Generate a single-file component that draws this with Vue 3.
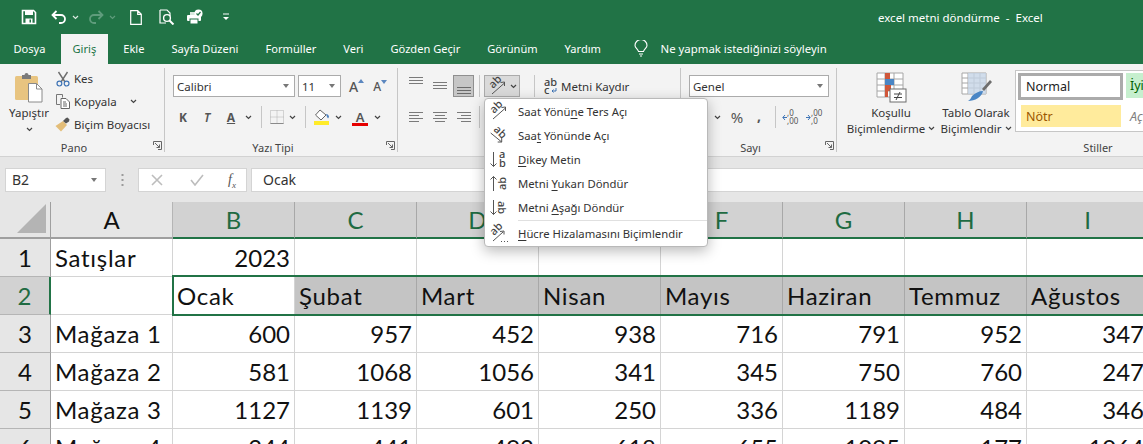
<script setup>
const tabs = ['Dosya', 'Giriş', 'Ekle', 'Sayfa Düzeni', 'Formüller', 'Veri', 'Gözden Geçir', 'Görünüm', 'Yardım']
const columns = ['A', 'B', 'C', 'D', 'E', 'F', 'G', 'H', 'I']
const months = ['Ocak', 'Şubat', 'Mart', 'Nisan', 'Mayıs', 'Haziran', 'Temmuz', 'Ağustos']
const stores = [
  { id: 3, name: 'Mağaza 1', values: [600, 957, 452, 938, 716, 791, 952, 347] },
  { id: 4, name: 'Mağaza 2', values: [581, 1068, 1056, 341, 345, 750, 760, 247] },
  { id: 5, name: 'Mağaza 3', values: [1127, 1139, 601, 250, 336, 1189, 484, 346] },
  { id: 6, name: 'Mağaza 4', values: [244, 441, 492, 618, 655, 1095, 177, 1064] }
]
</script>

<template>
  <div class="excel">
    <!-- Title bar -->
    <header class="titlebar">
      <div class="qat">
        <svg class="q-save" width="16" height="16" viewBox="0 0 16 16"><path d="M1.5 1.5h11l2 2v11h-13z" fill="none" stroke="#fff" stroke-width="1.6" /><rect x="4" y="2" width="8" height="4" fill="#fff" /><rect x="4.5" y="9.5" width="7" height="5" fill="#fff" /><rect x="8.5" y="10.5" width="1.5" height="3" fill="#217346" /></svg>
        <svg class="q-undo" width="16" height="14" viewBox="0 0 16 14"><path d="M5.5 1 1.5 5l4 4M2 5h8a4 4 0 0 1 0 8H8" fill="none" stroke="#fff" stroke-width="1.8" /></svg>
        <svg class="chev q-c1" width="7" height="5" viewBox="0 0 7 5"><path d="m1 1 2.500 2.500L6 1" fill="none" stroke="#d9e8df" stroke-width="1.200" /></svg>
        <svg class="q-redo" width="16" height="14" viewBox="0 0 16 14"><path d="m10.500 1 4 4-4 4M14 5H6a4 4 0 0 0 0 8h2" fill="none" stroke="#5f9c7c" stroke-width="1.800" /></svg>
        <svg class="chev q-c2" width="7" height="5" viewBox="0 0 7 5"><path d="m1 1 2.500 2.500L6 1" fill="none" stroke="#5f9c7c" stroke-width="1.200" /></svg>
        <svg class="q-new" width="12" height="15" viewBox="0 0 12 15"><path d="M.7.700h7l3.600 3.600v10H.7zM7.700.7v3.600h3.600" fill="#217346" stroke="#fff" stroke-width="1.200" /></svg>
        <svg class="q-preview" width="16" height="16" viewBox="0 0 16 16"><path d="M1 1h7l3 3v3M1 1v13h6" fill="none" stroke="#fff" stroke-width="1.200" /><circle cx="8" cy="9" r="3.400" fill="none" stroke="#fff" stroke-width="1.400" /><path d="m10.500 11.500 4 4" stroke="#fff" stroke-width="2" /></svg>
        <svg class="q-print" width="18" height="16" viewBox="0 0 18 16"><rect x="1" y="6" width="14" height="6" rx="1" fill="#fff" /><rect x="4" y="10" width="8" height="5" fill="#fff" stroke="#217346" /><rect x="4" y="3" width="6" height="3" fill="#d9e8df" /><circle cx="12.500" cy="4.500" r="4" fill="#fff" /><path d="m10.500 4.500 1.500 1.500 2.500-3" fill="none" stroke="#217346" stroke-width="1.200" /></svg>
        <svg class="q-more" width="8" height="8" viewBox="0 0 8 8"><path d="M1 1h6" stroke="#fff" /><path d="M1 4h6L4 7z" fill="#fff" /></svg>
      </div>
      <div class="doc-title">excel metni döndürme &nbsp;-&nbsp; Excel</div>
    </header>

    <!-- Tabs -->
    <nav class="tabs">
      <div v-for="tab in tabs" :key="tab" class="tab" :class="{ active: tab === 'Giriş' }">{{ tab }}</div>
      <svg class="bulb" width="14" height="17" viewBox="0 0 14 17"><path d="M4.500 11.500C4 9 1 8 1 5.500a6 6 0 0 1 12 0C13 8 10 9 9.500 11.500zM5 14h4M6 16h2" fill="none" stroke="#fff" stroke-width="1.100" /></svg>
      <div class="tell">Ne yapmak istediğinizi söyleyin</div>
    </nav>

    <!-- Ribbon -->
    <section class="ribbon">
      <div class="group g-pano">
        <div class="group-body pano-body">
          <div class="paste">
            <svg width="30" height="31" viewBox="0 0 30 31"><rect x="1" y="4" width="23" height="24" rx="1.500" fill="#e8c480" /><path d="M8 3h2.500a2 2 0 0 1 4 0H17v4H8z" fill="#7a7a7a" /><path d="M14.500 11.500h8l5.500 5.500v13H14.500z" fill="#fff" stroke="#8a8a8a" /><path d="M22.500 11.500V17H28" fill="none" stroke="#8a8a8a" /></svg>
            <span class="paste-label">Yapıştır</span>
            <svg class="chev" width="7" height="5" viewBox="0 0 7 5"><path d="m1 1 2.500 2.500L6 1" fill="none" stroke="#444" stroke-width="1.200" /></svg>
          </div>
          <div class="clip-list">
            <div class="clip-item">
              <svg width="14" height="16" viewBox="0 0 14 16"><path d="M2.500 1 9 11M11.500 1 5 11" stroke="#6d6d6d" stroke-width="1.400" /><circle cx="3.400" cy="12.600" r="2.400" fill="none" stroke="#3f74b5" stroke-width="1.200" /><circle cx="10.600" cy="12.600" r="2.400" fill="none" stroke="#3f74b5" stroke-width="1.200" /></svg>
              <span>Kes</span>
            </div>
            <div class="clip-item">
              <svg width="14" height="15" viewBox="0 0 14 15"><path d="M.5.500h6v3M.5.500v10h3.500" fill="none" stroke="#777" /><path d="M5 4.500h5l3.500 3.500v6.500H5zM7 8h3M7 10h4M7 12h4" fill="#fff" stroke="#666" /></svg>
              <span>Kopyala</span>
              <svg class="chev clip-chev" width="7" height="5" viewBox="0 0 7 5"><path d="m1 1 2.500 2.500L6 1" fill="none" stroke="#444" stroke-width="1.200" /></svg>
            </div>
            <div class="clip-item">
              <svg width="16" height="15" viewBox="0 0 16 15"><path d="M8 4 12 8 6 14.500 0.500 9z" fill="#e3bd78" /><path d="M8 4l3-3 1.500-.500 2 2-.500 2-3 2z" fill="#555" /></svg>
              <span>Biçim Boyacısı</span>
            </div>
          </div>
        </div>
        <div class="group-label">Pano
          <svg class="launcher" width="9" height="9" viewBox="0 0 9 9"><path d="M.5 4V.5H8.500V8.500H5M2 2l4.500 4.500M6.500 3.500v3h-3" fill="none" stroke="#666" /></svg>
        </div>
      </div>

      <div class="group g-font">
        <div class="group-body tool-rows">
          <div class="tool-row">
            <div class="select s-font"><span>Calibri</span><i class="caret"></i></div>
            <div class="select s-size"><span>11</span><i class="caret"></i></div>
            <div class="grow-a g1">A<svg width="6" height="4" viewBox="0 0 6 4"><path d="M0 4 3 0l3 4z" fill="#5b87bf" /></svg></div>
            <div class="grow-a g2">A<svg width="6" height="4" viewBox="0 0 6 4"><path d="M0 0l3 4 3-4z" fill="#5b87bf" /></svg></div>
          </div>
          <div class="tool-row r2-font">
            <div class="fmt w24 bold">K</div>
            <div class="fmt w24 italic">T</div>
            <div class="fmt w24 under">A</div>
            <svg class="chev c10" width="7" height="5" viewBox="0 0 7 5"><path d="m1 1 2.500 2.500L6 1" fill="none" stroke="#444" stroke-width="1.200" /></svg>
            <i class="vsep s-a"></i>
            <div class="fmt w21"><svg width="14" height="14" viewBox="0 0 14 14"><path d="M.5.500h13v13H.5zM7 .5v13M.5 7h13" fill="none" stroke="#b0b0b0" stroke-dasharray="1 1" /><path d="M.5 13.500h13" stroke="#8a8a8a" /></svg></div>
            <svg class="chev c10 ml2" width="7" height="5" viewBox="0 0 7 5"><path d="m1 1 2.500 2.500L6 1" fill="none" stroke="#444" stroke-width="1.200" /></svg>
            <i class="vsep s-a"></i>
            <div class="fmt w23"><svg width="16" height="16" viewBox="0 0 16 16"><path d="M6 1 1.500 6 7 11 12 6z" fill="#fff" stroke="#666" /><path d="M12 5c2 0 3 1.500 3 3l-1 1.500-1-1.500z" fill="#4f81bd" /><rect x="0" y="12" width="15" height="4" fill="#ffeb2a" /></svg></div>
            <svg class="chev c10" width="7" height="5" viewBox="0 0 7 5"><path d="m1 1 2.500 2.500L6 1" fill="none" stroke="#444" stroke-width="1.200" /></svg>
            <div class="fmt w24 ml5 color-a">A</div>
            <svg class="chev c10" width="7" height="5" viewBox="0 0 7 5"><path d="m1 1 2.500 2.500L6 1" fill="none" stroke="#444" stroke-width="1.200" /></svg>
          </div>
        </div>
        <div class="group-label">Yazı Tipi
          <svg class="launcher" width="9" height="9" viewBox="0 0 9 9"><path d="M.5 4V.5H8.500V8.500H5M2 2l4.500 4.500M6.500 3.500v3h-3" fill="none" stroke="#666" /></svg>
        </div>
      </div>

      <div class="group g-align">
        <div class="group-body tool-rows">
          <div class="tool-row r1-align">
            <div class="fmt w24"><svg class="up-6" width="14" height="10" viewBox="0 0 14 10"><path d="M0 .5h14M0 3.500h14M0 6.500h14" stroke="#7a7a7a" /></svg></div>
            <div class="fmt w24"><svg width="14" height="10" viewBox="0 0 14 10"><path d="M0 1.500h14M0 4.500h14M0 7.500h14" stroke="#7a7a7a" /></svg></div>
            <div class="fmt bottom-btn"><svg class="down-5" width="14" height="10" viewBox="0 0 14 10"><path d="M0 3.500h14M0 6.500h14M0 9.500h14" stroke="#6a6a6a" /></svg></div>
            <i class="vsep s-b"></i>
            <div class="orient-btn">
              <svg width="20" height="20" viewBox="0 0 20 20"><text transform="translate(5 13) rotate(-45)" class="ab">ab</text><path d="M4 18 16.500 7M12.500 6.500l4-.500v4" fill="none" stroke="#555" /></svg>
              <svg class="chev" width="7" height="5" viewBox="0 0 7 5"><path d="m1 1 2.500 2.500L6 1" fill="none" stroke="#444" stroke-width="1.200" /></svg>
            </div>
            <i class="vsep s-c"></i>
            <div class="wrap-text">
              <svg width="14" height="16" viewBox="0 0 14 16"><text x="0" y="7.500" class="ab">ab</text><text x="0" y="15.500" class="ab">c</text><path d="M12 10v3H8M9.500 11.500 8 13l1.500 1.500" fill="none" stroke="#3f74b5" /></svg>
              <span>Metni Kaydır</span>
            </div>
          </div>
          <div class="tool-row r2-align">
            <div class="fmt w24"><svg width="14" height="11" viewBox="0 0 14 11"><path d="M0 .5h14M0 3.500h10M0 6.500h14M0 9.500h10" stroke="#7a7a7a" /></svg></div>
            <div class="fmt w24"><svg width="14" height="11" viewBox="0 0 14 11"><path d="M0 .5h14M2 3.500h10M0 6.500h14M2 9.500h10" stroke="#7a7a7a" /></svg></div>
            <div class="fmt w24"><svg width="14" height="11" viewBox="0 0 14 11"><path d="M0 .5h14M4 3.500h10M0 6.500h14M4 9.500h10" stroke="#7a7a7a" /></svg></div>
            <i class="vsep s-d"></i>
          </div>
        </div>
      </div>

      <div class="group g-num">
        <div class="group-body tool-rows">
          <div class="tool-row">
            <div class="select s-num"><span>Genel</span><i class="caret"></i></div>
          </div>
          <div class="tool-row r2-num">
            <svg class="chev c10" width="7" height="5" viewBox="0 0 7 5"><path d="m1 1 2.500 2.500L6 1" fill="none" stroke="#444" stroke-width="1.200" /></svg>
            <div class="fmt w24 percent">%</div>
            <div class="fmt w20 comma">,</div>
            <i class="vsep s-e"></i>
            <div class="dec d1"><svg width="5" height="7" viewBox="0 0 5 7"><path d="M5 3.500H1M3 1 .8 3.500 3 6" fill="none" stroke="#3f74b5" /></svg><span>,0<br />,00</span></div>
            <div class="dec d2"><svg width="5" height="7" viewBox="0 0 5 7"><path d="M0 3.500h4M2 1l2.200 2.500L2 6" fill="none" stroke="#3f74b5" /></svg><span>,00<br />,0</span></div>
          </div>
        </div>
        <div class="group-label">Sayı
          <svg class="launcher" width="9" height="9" viewBox="0 0 9 9"><path d="M.5 4V.5H8.500V8.500H5M2 2l4.500 4.500M6.500 3.500v3h-3" fill="none" stroke="#666" /></svg>
        </div>
      </div>

      <div class="group g-styles">
        <div class="group-body styles-body">
          <div class="big-btn b-cond">
            <svg width="31" height="31" viewBox="0 0 31 31"><path d="M1 1h26v24H1zM9 1v24M18 1v24M1 7h26M1 13h26M1 19h26" fill="#fff" stroke="#a6a6a6" /><rect x="9" y="1" width="5" height="6" fill="#d0573a" /><rect x="9" y="7" width="9" height="6" fill="#4a86c5" /><rect x="9" y="13" width="6" height="6" fill="#d0573a" /><rect x="9" y="19" width="3" height="6" fill="#d0573a" /><rect x="14" y="17" width="16" height="13" fill="#fff" stroke="#6d6d6d" /><path d="M18 22h8M18 25.500h8M24 20l-4 8" stroke="#444" fill="none" /></svg>
            <span class="big-text">Koşullu</span>
            <span class="big-text">Biçimlendirme <svg class="chev" width="7" height="5" viewBox="0 0 7 5"><path d="m1 1 2.500 2.500L6 1" fill="none" stroke="#444" stroke-width="1.200" /></svg></span>
          </div>
          <div class="big-btn b-table">
            <svg width="31" height="31" viewBox="0 0 31 31"><path d="M1 1h24v21H1zM7 1v21M13 1v21M19 1v21M1 6h24M1 11h24M1 16h24" fill="#fff" stroke="#a6a6a6" /><path d="M7 1h18v21H7z" fill="#c5d4e6" opacity=".8" /><path d="M21 17 29 8l2 2-8 9z" fill="#6e6e6e" /><path d="M22 19c-1 6-8 10-15 10 2-1 3-3 4-5 3-3 7-5 11-5z" fill="#4a86c5" /></svg>
            <span class="big-text">Tablo Olarak</span>
            <span class="big-text">Biçimlendir <svg class="chev" width="7" height="5" viewBox="0 0 7 5"><path d="m1 1 2.500 2.500L6 1" fill="none" stroke="#444" stroke-width="1.200" /></svg></span>
          </div>
          <div class="gallery">
            <div class="style-normal">Normal</div>
            <div class="style-good">İyi</div>
            <div class="style-neutral">Nötr</div>
            <div class="style-note">Açıklama</div>
          </div>
        </div>
        <div class="group-label no-launcher">Stiller</div>
      </div>
    </section>

    <!-- Formula bar -->
    <section class="formula-band">
      <div class="name-box"><span>B2</span><i class="caret"></i></div>
      <svg class="dots" width="3" height="14" viewBox="0 0 3 14"><path d="M1.500 1v2M1.500 6v2M1.500 11v2" stroke="#9a9a9a" stroke-width="2" /></svg>
      <div class="fx-box">
        <svg width="12" height="12" viewBox="0 0 12 12"><path d="m1 1 10 10M11 1 1 11" stroke="#bdbdbd" stroke-width="1.600" /></svg>
        <svg width="14" height="12" viewBox="0 0 14 12"><path d="m1 6 4 5 8-10" fill="none" stroke="#bdbdbd" stroke-width="1.600" /></svg>
        <span class="fx">f<sub>x</sub></span>
      </div>
      <div class="formula-input">Ocak</div>
    </section>

    <!-- Sheet -->
    <section class="sheet">
      <div class="row head-row">
        <div class="corner"><svg width="30" height="30" viewBox="0 0 30 30"><path d="M29 0v29H0z" fill="#b4b4b4" /></svg></div>
        <div v-for="col in columns" :key="col" class="col-head" :class="{ on: col !== 'A' }">{{ col }}</div>
      </div>

      <div class="row">
        <div class="row-head">1</div>
        <div class="cell">Satışlar</div>
        <div class="cell num">2023</div>
        <div v-for="n in 7" :key="n" class="cell"></div>
      </div>

      <div class="row">
        <div class="row-head on">2</div>
        <div class="cell"></div>
        <div v-for="(month, i) in months" :key="month" class="cell" :class="{ picked: i > 0 }">{{ month }}</div>
      </div>

      <div v-for="store in stores" :key="store.id" class="row">
        <div class="row-head">{{ store.id }}</div>
        <div class="cell">{{ store.name }}</div>
        <div v-for="(value, i) in store.values" :key="i" class="cell num">{{ value }}</div>
      </div>

      <div class="selection"></div>
    </section>

    <!-- Text orientation menu -->
    <div class="menu">
      <div class="menu-item">
        <svg width="20" height="20" viewBox="0 0 20 20"><text transform="translate(5 13) rotate(-45)" class="ab">ab</text><path d="M4 18 16.500 7M12.500 6.500l4-.500v4" fill="none" stroke="#555" /></svg>
        <span>Saat Yönü<u>n</u>e Ters Açı</span>
      </div>
      <div class="menu-item">
        <svg width="20" height="20" viewBox="0 0 20 20"><text transform="translate(4 5) rotate(45)" class="ab">ab</text><path d="M1.700 8 12.700 17M12.700 13v4H8.700" fill="none" stroke="#555" /></svg>
        <span>Saa<u>t</u> Yönünde Açı</span>
      </div>
      <div class="menu-item">
        <svg width="20" height="20" viewBox="0 0 20 20"><path d="M4.500 3v14.500M1.500 14.500l3 3 3-3" fill="none" stroke="#555" /><text x="10" y="8.700" class="ab">a</text><text x="10" y="18.300" class="ab">b</text></svg>
        <span><u>D</u>ikey Metin</span>
      </div>
      <div class="menu-item">
        <svg width="20" height="20" viewBox="0 0 20 20"><path d="M4.500 18V3.500M1.500 6.500l3-3 3 3" fill="none" stroke="#555" /><text transform="translate(17 17) rotate(-90)" class="ab">ab</text></svg>
        <span>Metni <u>Y</u>ukarı Döndür</span>
      </div>
      <div class="menu-item">
        <svg width="20" height="20" viewBox="0 0 20 20"><path d="M4.500 3v14.500M1.500 14.500l3 3 3-3" fill="none" stroke="#555" /><text transform="translate(9 4) rotate(90)" class="ab">ab</text></svg>
        <span>Metni <u>A</u>şağı Döndür</span>
      </div>
      <div class="menu-sep"></div>
      <div class="menu-item">
        <svg width="20" height="20" viewBox="0 0 20 20"><text transform="translate(5 13) rotate(-45)" class="ab">ab</text><path d="M4 18 14 9M11 8.500l4-.500v3.500" fill="none" stroke="#555" /><path d="M12 18.500h1M15 18.500h1M18 18.500h1" stroke="#555" /></svg>
        <span><u>H</u>ücre Hizalamasını Biçimlendir</span>
      </div>
    </div>
  </div>
</template>

<style scoped>
.excel {
  position: relative;
  width: 1143px;
  height: 444px;
  overflow: hidden;
  background: #fff;
  font-family: "Noto Sans", sans-serif;
  font-size: 11.5px;
  color: #333;
}

svg {
  display: block;
  flex: none;
}

.ab {
  font-family: "Noto Sans", sans-serif;
  font-size: 11px;
  font-weight: 500;
  fill: #444;
}

/* title bar */
.titlebar {
  display: flex;
  align-items: center;
  height: 34px;
  background: #217346;
  color: #fff;
}

.qat {
  display: flex;
  align-items: center;
  padding-left: 21px;
}

.q-undo { margin-left: 14px; }
.q-c1 { margin-left: 5px; }
.q-redo { margin-left: 9px; }
.q-c2 { margin-left: 5px; }
.q-new { margin-left: 14px; }
.q-preview { margin-left: 17px; }
.q-print { margin-left: 11px; }
.q-more { margin-left: 18px; }

.doc-title {
  position: absolute;
  left: 878px;
  top: 10px;
  font-size: 11.500px;
  white-space: nowrap;
}

/* tabs */
.tabs {
  display: flex;
  align-items: stretch;
  height: 30px;
  background: #217346;
  color: #fff;
  font-size: 11.100px;
}

.tab {
  display: flex;
  align-items: center;
  padding: 0 13.500px 2px;
  white-space: nowrap;
}

.tab.active {
  background: #f3f3f3;
  color: #217346;
  padding: 0 12px 2px;
  margin: 0 1.500px;
}

.bulb {
  align-self: center;
  margin: -2px 0 0 20px;
}

.tell {
  display: flex;
  align-items: center;
  margin-left: 12px;
  padding-bottom: 2px;
  font-size: 11.400px;
  white-space: nowrap;
}

/* ribbon */
.ribbon {
  display: flex;
  height: 93px;
  background: #f3f3f3;
  border-bottom: 1px solid #d2d2d2;
  padding-top: 4px;
  box-sizing: border-box;
}

.group {
  position: relative;
  display: flex;
  flex-direction: column;
  flex: none;
  height: 88px;
}

.group::after {
  content: "";
  position: absolute;
  right: 0;
  top: 0;
  height: 84px;
  width: 1px;
  background: #c6c6c6;
}

.g-pano { width: 165px; }
.g-font { width: 233px; }
.g-align { width: 283px; }
.g-num { width: 156px; }
.g-styles { width: 522px; }

.group-body {
  flex: 1;
  min-height: 0;
}

.group-label {
  position: relative;
  height: 16px;
  padding-right: 17px;
  line-height: 16px;
  text-align: center;
  color: #444;
  font-size: 11px;
}

.group-label.no-launcher {
  padding-right: 0;
}

.launcher {
  position: absolute;
  right: 3px;
  top: 1px;
}

/* Pano */
.pano-body {
  display: flex;
  padding-left: 8px;
}

.paste {
  display: flex;
  flex-direction: column;
  align-items: center;
  width: 42px;
  padding-top: 4px;
}

.paste-label {
  margin-top: 2px;
  line-height: 16px;
}

.paste .chev { margin-top: 6px; }

.clip-list {
  margin: -1px 0 0 5px;
}

.clip-item {
  display: flex;
  align-items: center;
  gap: 3px;
  height: 23px;
  white-space: nowrap;
}

.clip-item > svg:first-child {
  width: 16px;
}

.clip-chev { margin-left: 10px; }

/* tool rows */
.tool-rows {
  display: flex;
  flex-direction: column;
  gap: 9px;
  padding-top: 7px;
}

.tool-row {
  display: flex;
  align-items: center;
  height: 22px;
}

.g-font .tool-rows { padding-left: 8px; }
.g-num .tool-rows { padding-left: 8px; }

.select {
  display: flex;
  align-items: center;
  justify-content: space-between;
  height: 22px;
  box-sizing: border-box;
  padding: 0 5px 0 3px;
  background: #fff;
  border: 1px solid #ababab;
  color: #333;
}

.caret {
  width: 0;
  height: 0;
  border: 3.500px solid transparent;
  border-top: 4px solid #777;
  border-bottom: 0;
}

.s-font { width: 122px; }
.s-size { width: 43px; margin-left: 3px; }
.s-num { width: 140px; }

.grow-a {
  display: flex;
  align-items: flex-start;
  color: #555;
  font-weight: 500;
}

.grow-a svg { margin-top: 2px; }
.g1 { margin-left: 8px; font-size: 14px; }
.g2 { margin-left: 9px; font-size: 12px; }

.fmt {
  display: flex;
  align-items: center;
  justify-content: center;
  flex: none;
  height: 22px;
  color: #555;
  font-size: 12px;
}

.w20 { width: 20px; }
.w21 { width: 21px; }
.w23 { width: 23px; }
.w24 { width: 24px; }
.ml2 { margin-left: 2px; }
.ml5 { margin-left: 5px; }
.c10 { margin: 0 1.500px 0 1.500px; }

.r2-font { margin-left: -2px; }

.vsep {
  display: block;
  flex: none;
  width: 1px;
  height: 22px;
  background: #c6c6c6;
}

.s-a { margin: 0 4px 0 8px; }
.s-b { margin: 0 4px 0 5px; }
.s-c { margin: 0 9px 0 14px; }
.s-d { margin-left: 3px; }
.s-e { margin: 0 6px; }

.bold { font-weight: 700; font-size: 12px; }
.italic { font-style: italic; font-weight: 600; }
.under { font-weight: 700; text-decoration: underline; }
.color-a {
  font-weight: 600;
  font-size: 13px;
  line-height: 14px;
}

.color-a::after {
  content: "";
  position: absolute;
  width: 16px;
  height: 3px;
  margin-top: 15px;
  background: #e60000;
}

.r1-align, .r2-align { padding-left: 6px; }

.bottom-btn {
  width: 21px;
  margin-left: 1px;
  box-sizing: border-box;
  background: #c6c6c6;
  border: 1px solid #8f8f8f;
}

.up-6 { transform: translateY(-4px); }
.down-5 { transform: translateY(3px); }

.orient-btn {
  display: flex;
  align-items: center;
  justify-content: center;
  gap: 2px;
  width: 36px;
  height: 22px;
  box-sizing: border-box;
  background: #dadada;
  border: 1px solid #ababab;
}

.wrap-text {
  display: flex;
  align-items: center;
  gap: 3px;
  white-space: nowrap;
}

.r2-num { padding-left: 23px; }
.percent { margin-left: 3px; font-size: 15px; }
.comma { font-weight: 700; font-size: 14px; align-items: flex-start; }

.dec {
  display: flex;
  align-items: center;
  flex: none;
  font-size: 8px;
  line-height: 8px;
  color: #555;
}

.d1 { width: 16px; }
.d2 { width: 16px; margin-left: 8px; }

/* Stiller */
.styles-body {
  display: flex;
}

.big-btn {
  display: flex;
  flex-direction: column;
  align-items: center;
  flex: none;
  padding-top: 4px;
}

.big-btn > svg { margin-bottom: 1px; }

.b-cond { width: 88px; margin-left: 10px; }
.b-table { width: 68px; margin-left: 7px; }

.big-text {
  display: flex;
  align-items: center;
  gap: 3px;
  height: 16px;
  white-space: nowrap;
  justify-content: center;
}

.gallery {
  display: grid;
  grid-template-columns: 108px 105px;
  grid-template-rows: 30px 24px;
  row-gap: 2px;
  align-content: start;
  flex: none;
  width: 225px;
  height: 62px;
  margin: 2px 0 0 5px;
  padding: 2px 0 0 2px;
  box-sizing: border-box;
  background: #fff;
  border: 1px solid #c6c6c6;
  font-size: 12.500px;
}

.style-normal {
  display: flex;
  align-items: center;
  width: 105px;
  height: 27px;
  padding-left: 5px;
  box-sizing: border-box;
  border: 3px solid #ababab;
  outline: 1px solid #fff;
  outline-offset: -4px;
  color: #222;
}

.style-good {
  display: flex;
  align-items: center;
  height: 25px;
  padding-left: 4px;
  background: #c6efce;
  color: #006100;
}

.style-neutral {
  display: flex;
  align-items: center;
  width: 100px;
  height: 22px;
  margin-left: 3px;
  padding-left: 5px;
  box-sizing: border-box;
  background: #ffeb9c;
  color: #9c5700;
}

.style-note {
  display: flex;
  align-items: center;
  height: 22px;
  padding-left: 4px;
  font-style: italic;
  color: #7f7f7f;
}

/* formula bar */
.formula-band {
  display: flex;
  align-items: flex-start;
  height: 45px;
  padding: 11px 0 0 5px;
  box-sizing: border-box;
  background: #e6e6e6;
}

.name-box {
  display: flex;
  align-items: center;
  justify-content: space-between;
  width: 101px;
  height: 24px;
  box-sizing: border-box;
  padding: 0 8px 1px 6px;
  background: #fff;
  border: 1px solid #d4d4d4;
  font-size: 14px;
}

.dots { margin: 5px 0 0 15px; }

.fx-box {
  display: flex;
  align-items: center;
  gap: 27px;
  width: 109px;
  height: 24px;
  margin-left: 14px;
  padding-left: 12px;
  box-sizing: border-box;
  background: #fff;
  border: 1px solid #d4d4d4;
}

.fx {
  font-family: "Liberation Serif", serif;
  font-style: italic;
  font-size: 14px;
  line-height: 14px;
  color: #555;
  margin-left: -3px;
}

.fx sub { font-size: 9px; line-height: 0; }

.formula-input {
  display: flex;
  align-items: center;
  flex: 1;
  height: 24px;
  box-sizing: border-box;
  margin-left: 4px;
  padding: 0 0 1px 11px;
  background: #fff;
  border: 1px solid #d4d4d4;
  border-right: 0;
  font-size: 14px;
}

/* sheet */
.sheet {
  position: relative;
  font-family: Lato, sans-serif;
  font-size: 24px;
  color: #111;
}

.row {
  display: grid;
  grid-template-columns: 51px repeat(9, 122px);
  height: 38px;
}

.head-row {
  height: 37px;
}

.corner {
  display: flex;
  align-items: flex-end;
  justify-content: flex-end;
  box-sizing: border-box;
  padding: 0 3px 3px 0;
  background: #e6e6e6;
  border-right: 1px solid #9f9f9f;
  border-bottom: 2px solid #9f9f9f;
}

.col-head {
  display: flex;
  align-items: center;
  justify-content: center;
  box-sizing: border-box;
  background: #e6e6e6;
  border-right: 1px solid #b5b5b5;
  border-bottom: 2px solid #9f9f9f;
}

.col-head.on {
  background: #d2d2d2;
  color: #1f6b42;
  border-right-color: #a8a8a8;
  border-bottom-color: #217346;
}

.row-head {
  display: flex;
  align-items: center;
  justify-content: center;
  box-sizing: border-box;
  background: #e6e6e6;
  border-right: 1px solid #9f9f9f;
  border-bottom: 1px solid #b5b5b5;
}

.row-head.on {
  background: #d2d2d2;
  color: #1f6b42;
  border-right: 2px solid #217346;
}

.cell {
  display: flex;
  align-items: center;
  box-sizing: border-box;
  padding: 0 4px;
  letter-spacing: 0.7px;
  border-right: 1px solid #d4d4d4;
  border-bottom: 1px solid #d4d4d4;
  white-space: nowrap;
}

.cell.num {
  justify-content: flex-end;
  letter-spacing: 0;
}

.cell.picked {
  background: #c4c4c4;
  border-right-color: #a8a8a8;
  border-bottom-color: #fff;
}

.selection {
  position: absolute;
  left: 172px;
  top: 73px;
  width: 1000px;
  height: 41px;
  box-sizing: border-box;
  border: 2px solid #217346;
}

/* orientation menu */
.menu {
  position: absolute;
  left: 484px;
  top: 98px;
  width: 224px;
  box-sizing: border-box;
  padding: 0 0 1px;
  background: #fff;
  border: 1px solid #b9b9b9;
  border-radius: 4px;
  box-shadow: 0 4px 14px rgba(0, 0, 0, 0.28);
  font-size: 11.300px;
}

.menu-item {
  display: flex;
  align-items: center;
  height: 24px;
  padding-left: 4px;
  white-space: nowrap;
  color: #333;
}

.menu-item svg {
  margin-right: 9px;
}

.menu-item u {
  text-underline-offset: 2px;
}

.menu-sep {
  height: 1px;
  margin: 1px 0 0 33px;
  background: #e0e0e0;
}
</style>

<style>
body {
  margin: 0;
  overflow: hidden;
}
</style>
